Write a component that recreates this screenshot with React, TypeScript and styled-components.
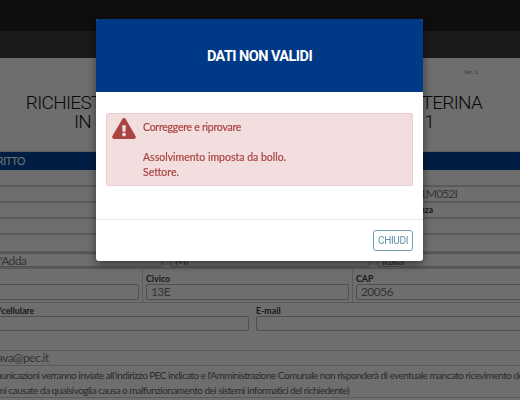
import React from 'react';
import styled, { createGlobalStyle } from 'styled-components';
import { FaExclamationTriangle } from 'react-icons/fa';

const Global = createGlobalStyle`
  html, body { margin: 0; padding: 0; height: 400px; overflow: hidden; background: #dcdcdc; }
  body { font-family: Lato, "Open Sans", sans-serif; color: #222; }
`;

const TopBar = styled.div`height: 31px; background: #1c1c1c;`;
const NavBar = styled.div`height: 27px; background: #343434;`;
const Sheet = styled.main`margin-left: -100px; width: 720px;`;
const Version = styled.div`height: 36px; padding: 11px 142px 0 0; box-sizing: border-box; text-align: right; font-size: 5.5px; line-height: 7px; color: #777;`;
const Title = styled.h1`
  margin: 0; height: 57px; padding-right: 12px; box-sizing: border-box; text-align: center; font: 300 19px/18.5px Roboto, sans-serif;
  letter-spacing: -.7px; color: #111; white-space: nowrap;
`;
const SectionBar = styled.div`
  height: 19px; background: #003a86; color: #e4e4e4; font: 400 10.5px/18px Lato, sans-serif; letter-spacing: -.4px; padding-left: 47px;
  border-top: 1px solid #c0c0c0; box-sizing: border-box; white-space: nowrap;
`;
const Row = styled.div<{ $h: number }>`
  display: flex; align-items: flex-end; height: ${p => p.$h}px; border-bottom: 2px solid #b4b4b4; box-sizing: border-box;
`;
const Value = styled.div<{ $w: number }>`
  width: ${p => p.$w}px; flex: none; text-align: right; font-size: 12px; line-height: 15px; letter-spacing: -.85px; color: #6a6a6a; white-space: nowrap;
`;
const StaticLabel = styled.label<{ $w: number }>`
  width: ${p => p.$w}px; flex: none; text-align: right; font-size: 8.5px; font-weight: 700; line-height: 14px; color: #333; white-space: nowrap;
`;
const FieldRow = styled.div<{ $h: number; $line?: 'thin' | 'thick' }>`
  display: flex; height: ${p => p.$h}px; box-sizing: border-box;
  border-bottom: ${p => (p.$line === 'thick' ? 2 : 1)}px solid ${p => (p.$line ? '#b4b4b4' : 'transparent')};
`;
const Field = styled.div<{ $w: number; $sep?: boolean; $pad?: number; $pb?: number }>`
  width: ${p => p.$w}px; flex: none; box-sizing: border-box; padding: 0 3px ${p => p.$pb ?? 2}px ${p => p.$pad ?? 3}px;
  display: flex; flex-direction: column; justify-content: flex-end;
  border-right: 1px solid ${p => (p.$sep ? '#b8b8b8' : 'transparent')};
`;
const Label = styled.label`font-size: 8.8px; font-weight: 700; line-height: 13px; height: 12px; color: #333; white-space: nowrap;`;
const Input = styled.div<{ $h?: number }>`
  height: ${p => p.$h ?? 16}px; border: 1px solid #a0a0a0; border-radius: 2px; box-sizing: border-box; padding-left: 4px;
  font-size: 12px; line-height: 14px; letter-spacing: -.6px; color: #6a6a6a; white-space: nowrap;
`;
const Gap = styled.div`height: 16px;`;
const PecLine = styled.div`
  box-sizing: border-box; height: 16px; border-top: 1px solid #b4b4b4; border-bottom: 1px solid #b4b4b4;
  padding-left: 38px; font-size: 12px; line-height: 14px; letter-spacing: -.5px; color: #6a6a6a; white-space: nowrap;
`;
const Notes = styled.div`padding-top: 2px; border-bottom: 1px solid #b4b4b4;`;
const Note = styled.p<{ $indent: number }>`
  margin: 0; padding-left: ${p => p.$indent}px; font-size: 10px; line-height: 14.5px; letter-spacing: -.53px; color: #555; white-space: nowrap;
`;

const Backdrop = styled.div`position: fixed; inset: 0; background: rgba(0,0,0,.5);`;
const Modal = styled.section`
  position: absolute; left: 96px; top: 19px; width: 327px; height: 242px; display: flex; flex-direction: column;
  background: #fff; border-radius: 3px; overflow: hidden; box-shadow: 0 3px 9px rgba(0,0,0,.5);
`;
const ModalHeader = styled.header`
  height: 73px; flex: none; padding-top: 1px; box-sizing: border-box; display: flex; align-items: center; justify-content: center; background: #003a86; color: #fff;
  font: 700 14.5px Roboto, sans-serif; letter-spacing: -.55px;
`;
const ModalBody = styled.div`flex: 1; padding: 21px 10px 0; border-bottom: 1px solid #e8e8e8;`;
const Alert = styled.div`
  height: 73px; box-sizing: border-box; display: flex; gap: 7px; padding: 3px 5px;
  background: #f2dede; border: 1px solid #ebccd1; border-radius: 2px; color: #a94442; font-size: 10.5px; line-height: 15px;
  -webkit-text-stroke: .2px #a94442;
`;
const AlertIcon = styled(FaExclamationTriangle)`width: 24px; height: 21px; flex: none; margin-top: 1px;`;
const AlertText = styled.div`padding-top: 3px;`;
const Lead = styled.span`letter-spacing: -.25px;`;
const ModalFooter = styled.footer`height: 41px; flex: none; display: flex; justify-content: flex-end; align-items: flex-start; padding: 10px 10px 0; box-sizing: border-box;`;
const CloseButton = styled.button`
  width: 40px; height: 21px; padding: 0; background: #fff; border: 1px solid #6f9fb0; border-radius: 3px; color: #5b94a8;
  font: 400 10px Roboto, sans-serif; letter-spacing: -.35px;
`;

export default function App() {
  return (
    <>
      <Global />
      <TopBar />
      <NavBar />
      <Sheet>
        <Version>Ver. 1</Version>
        <Title>RICHIESTA PERMESSO DI SOSTA DI VIA SANTA CATERINA<br />IN{'\u00a0'} ZONA A TRAFFICO LIMITATO, VARCO NR. 1</Title>
        <SectionBar>AVENTE DIRITTO</SectionBar>
        <Row $h={17} />
        <Row $h={16}><Value $w={557}>RSSMRA80A01M052I</Value></Row>
        <Row $h={16}><StaticLabel $w={533}>Cittadinanza</StaticLabel></Row>
        <Row $h={16} />
        <Row $h={18} />
        <FieldRow $h={16} $line="thick">
          <Field $w={267} $pad={56} $pb={0}><Input $h={14}>Vaprio d'Adda</Input></Field>
          <Field $w={207} $pb={0}><Input $h={14}>MI</Input></Field>
          <Field $w={246} $pb={0}><Input $h={14}>Italia</Input></Field>
        </FieldRow>
        <FieldRow $h={34} $line="thin">
          <Field $w={243} $sep><Input /></Field>
          <Field $w={210} $sep><Label>Civico</Label><Input>13E</Input></Field>
          <Field $w={267}><Label>CAP</Label><Input>20056</Input></Field>
        </FieldRow>
        <FieldRow $h={31}>
          <Field $w={353} $pad={64}><Label>Telefono/cellulare</Label><Input $h={15} /></Field>
          <Field $w={367}><Label>E-mail</Label><Input $h={15} /></Field>
        </FieldRow>
        <Gap />
        <PecLine>mario.rossi.cava@pec.it</PecLine>
        <Notes>
          <Note $indent={53}>Tutte le comunicazioni verranno inviate all'indirizzo PEC indicato e l'Amministrazione Comunale non risponderà di eventuale mancato ricevimento delle</Note>
          <Note $indent={72}>problemi causate da qualsivoglia causa o malfunzionamento dei sistemi informatici del richiedente)</Note>
        </Notes>
      </Sheet>
      <Backdrop />
      <Modal>
        <ModalHeader>DATI NON VALIDI</ModalHeader>
        <ModalBody>
          <Alert>
            <AlertIcon />
            <AlertText><Lead>Correggere e riprovare</Lead><br /><br />Assolvimento imposta da bollo.<br />Settore.</AlertText>
          </Alert>
        </ModalBody>
        <ModalFooter><CloseButton>CHIUDI</CloseButton></ModalFooter>
      </Modal>
    </>
  );
}
